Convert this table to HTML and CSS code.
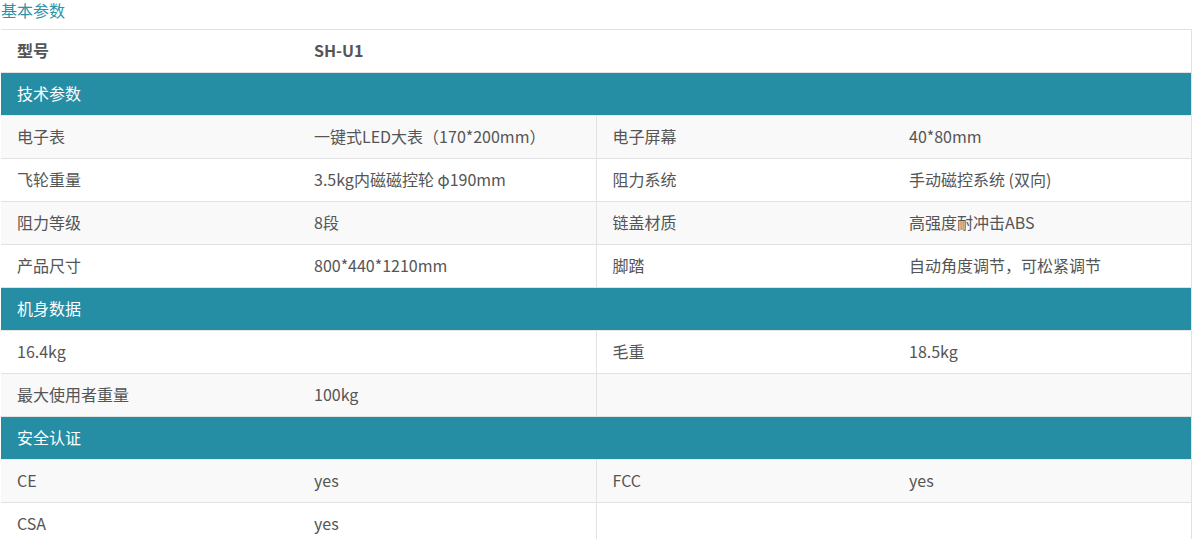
FILE: index.html
```html
<!DOCTYPE html>
<html lang="zh-CN">
<head>
<meta charset="utf-8">
<title>基本参数</title>
<link rel="stylesheet" href="styles.css">
</head>
<body>
<div class="page">
  <h2 class="title">基本参数</h2>
  <table class="spec">
    <colgroup>
      <col class="c1"><col class="c2"><col class="c3"><col class="c4">
    </colgroup>
    <tbody>
      <tr class="model">
        <td>型号</td>
        <td colspan="3">SH-U1</td>
      </tr>
      <tr class="head"><td colspan="4">技术参数</td></tr>
      <tr class="alt">
        <td>电子表</td><td>一键式LED大表（170*200mm）</td>
        <td class="split">电子屏幕</td><td>40*80mm</td>
      </tr>
      <tr>
        <td>飞轮重量</td><td>3.5kg内磁磁控轮 φ190mm</td>
        <td class="split">阻力系统</td><td>手动磁控系统 (双向)</td>
      </tr>
      <tr class="alt">
        <td>阻力等级</td><td>8段</td>
        <td class="split">链盖材质</td><td>高强度耐冲击ABS</td>
      </tr>
      <tr>
        <td>产品尺寸</td><td>800*440*1210mm</td>
        <td class="split">脚踏</td><td>自动角度调节，可松紧调节</td>
      </tr>
      <tr class="head"><td colspan="4">机身数据</td></tr>
      <tr>
        <td colspan="2">16.4kg</td>
        <td class="split">毛重</td><td>18.5kg</td>
      </tr>
      <tr class="alt">
        <td>最大使用者重量</td><td>100kg</td>
        <td class="split empty" colspan="2"></td>
      </tr>
      <tr class="head"><td colspan="4">安全认证</td></tr>
      <tr class="alt">
        <td>CE</td><td>yes</td>
        <td class="split">FCC</td><td>yes</td>
      </tr>
      <tr>
        <td>CSA</td><td>yes</td>
        <td class="split empty" colspan="2"></td>
      </tr>
    </tbody>
  </table>
</div>
</body>
</html>
```

FILE: styles.css
```css
html, body {
  margin: 0;
  padding: 0;
  background: #ffffff;
}

body {
  font-family: "Noto Sans CJK SC", "Open Sans", sans-serif;
  font-size: 16px;
  color: #555555;
}

.page {
  width: 1194px;
}

.title {
  margin: 0;
  padding: 0 0 0 1px;
  height: 29px;
  font-size: 16px;
  font-weight: normal;
  line-height: 20px;
  color: #2a93a8;
}

.spec {
  margin-left: 1px;
  width: 1190px;
  border-collapse: collapse;
  table-layout: fixed;
  border-top: 1px solid #e2e2e2;
  border-right: 1px solid #e2e2e2;
}

.c1 { width: 297px; }
.c2 { width: 298px; }
.c3 { width: 297px; }
.c4 { width: 298px; }

.spec td {
  height: 40px;
  padding: 0 0 2px 16px;
  border-bottom: 1px solid #e2e2e2;
  vertical-align: middle;
  white-space: nowrap;
  line-height: 20px;
  background: #ffffff;
}

.spec tr.alt td {
  background: #f9f9f9;
}

.spec tr.model td {
  font-weight: bold;
  color: #555555;
}

.spec tr.head td {
  background: #258ea5;
  color: #ffffff;
  border-bottom-color: #e8e8e8;
}

.spec td.split {
  border-left: 1px solid #e2e2e2;
}
```
